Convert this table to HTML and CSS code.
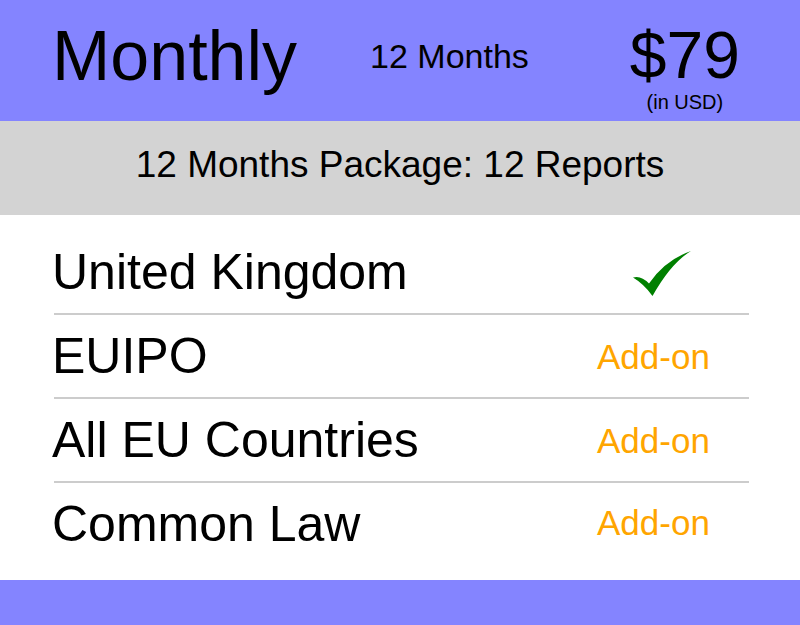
FILE: index.html
```html
<!DOCTYPE html>
<html lang="en">
<head>
<meta charset="utf-8">
<title>Monthly plan</title>
<link rel="stylesheet" href="styles.css">
</head>
<body>
  <div class="card">
    <header class="plan-head">
      <div class="plan-name">Monthly</div>
      <div class="plan-term">12 Months</div>
      <div class="plan-price">
        <div class="amount">$79</div>
        <div class="currency">(in USD)</div>
      </div>
    </header>
    <div class="package">12 Months Package: 12 Reports</div>
    <ul class="features">
      <li class="feature">
        <span class="feature-name">United Kingdom</span>
        <span class="feature-value">
          <svg class="check" width="60" height="46" viewBox="0 0 60 46" aria-hidden="true">
            <path d="M1 27.5 Q9 25 17 33.5 Q33 10 59 1 Q39 13 20.5 46 Q12 34 1 27.5 Z" fill="#008000"/>
          </svg>
        </span>
      </li>
      <li class="feature">
        <span class="feature-name">EUIPO</span>
        <span class="feature-value addon">Add-on</span>
      </li>
      <li class="feature">
        <span class="feature-name">All EU Countries</span>
        <span class="feature-value addon">Add-on</span>
      </li>
      <li class="feature">
        <span class="feature-name">Common Law</span>
        <span class="feature-value addon">Add-on</span>
      </li>
    </ul>
    <footer class="plan-foot"></footer>
  </div>
</body>
</html>
```
FILE: styles.css
```css
* {
  box-sizing: border-box;
}

html, body {
  margin: 0;
  padding: 0;
  background: #ffffff;
}

body {
  font-family: "Liberation Sans", Arial, sans-serif;
  color: #000000;
}

.card {
  width: 800px;
}

.plan-head {
  display: flex;
  align-items: flex-start;
  height: 121px;
  background: #8484ff;
}

.plan-name {
  margin-left: 52px;
  padding-top: 21px;
  font-size: 70px;
  line-height: 1;
}

.plan-term {
  margin-left: 73px;
  padding-top: 39px;
  font-size: 34px;
  line-height: 1;
}

.plan-price {
  display: flex;
  flex-direction: column;
  align-items: center;
  width: 120px;
  margin-left: 96px;
  padding-top: 22px;
}

.amount {
  font-size: 66px;
  line-height: 1;
}

.currency {
  margin-top: 4px;
  font-size: 20px;
  line-height: 1;
}

.package {
  height: 94px;
  padding-top: 25px;
  background: #d3d3d3;
  text-align: center;
  font-size: 37px;
  line-height: 1;
}

.features {
  list-style: none;
  margin: 0;
  padding: 16px 51px 15px 54px;
}

.feature {
  display: grid;
  grid-template-columns: 1fr 152px;
  align-items: center;
  height: 84px;
  border-bottom: 2px solid #cccccc;
}

.feature:last-child {
  height: 82px;
  border-bottom: none;
}

.feature-name {
  margin-left: -2px;
  font-size: 50px;
  line-height: 1;
}

.feature-value {
  display: flex;
  align-items: center;
}

.addon {
  color: #ffa500;
  font-size: 35px;
  line-height: 1;
}

.feature:last-child .addon {
  margin-top: -4px;
}

.check {
  display: block;
  margin-left: 35px;
  margin-top: 2px;
}

.plan-foot {
  height: 45px;
  background: #8484ff;
}
```
